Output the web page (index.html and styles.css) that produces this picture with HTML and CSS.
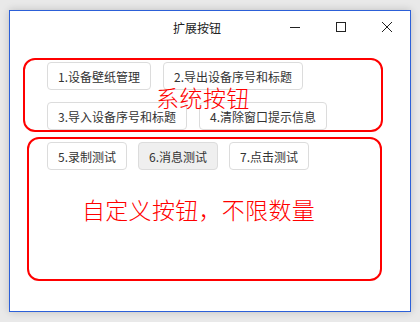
FILE: index.html
```html
<!DOCTYPE html>
<html lang="zh-CN">
<head>
  <meta charset="UTF-8" />
  <meta name="viewport" content="width=device-width, initial-scale=1.0"/>
  <title>扩展按钮</title>
  <link rel="stylesheet" href="styles.css">
</head>
<body>
  <div class="window">
    <div class="titlebar">
      <span class="title">扩展按钮</span>
      <button class="ctrl" type="button" aria-label="最小化">
        <svg width="12" height="12" viewBox="0 0 12 12"><path d="M1 6.5h10" stroke="#222" stroke-width="1"/></svg>
      </button>
      <button class="ctrl" type="button" aria-label="最大化">
        <svg width="12" height="12" viewBox="0 0 12 12"><rect x="1.5" y="1.5" width="9" height="9" fill="none" stroke="#222" stroke-width="1"/></svg>
      </button>
      <button class="ctrl" type="button" aria-label="关闭">
        <svg width="12" height="12" viewBox="0 0 12 12"><path d="M1 1l10 10M11 1L1 11" stroke="#222" stroke-width="1"/></svg>
      </button>
    </div>

    <div class="content">
      <div class="group system">
        <div class="row">
          <button class="btn" type="button">1.设备壁纸管理</button>
          <button class="btn" type="button">2.导出设备序号和标题</button>
        </div>
        <div class="row">
          <button class="btn" type="button">3.导入设备序号和标题</button>
          <button class="btn" type="button">4.清除窗口提示信息</button>
        </div>
        <span class="group-label">系统按钮</span>
      </div>

      <div class="group custom">
        <div class="row">
          <button class="btn" type="button">5.录制测试</button>
          <button class="btn active" type="button">6.消息测试</button>
          <button class="btn" type="button">7.点击测试</button>
        </div>
        <p class="custom-label">自定义按钮，不限数量</p>
      </div>
    </div>
  </div>
</body>
</html>
```

FILE: styles.css
```css
body {
  margin: 0;
  padding: 10px 9px;
  background: #e9e9e9;
  font-family: "Noto Sans CJK SC", "Microsoft YaHei", sans-serif;
}

.window {
  width: 402px;
  height: 302px;
  box-sizing: border-box;
  border: 1px solid #2c60d8;
  background: #fff;
  box-shadow: 0 0 8px rgba(0,0,0,0.18);
}

.titlebar {
  display: flex;
  align-items: center;
  height: 32px;
}

.title {
  flex: 1;
  text-align: center;
  padding-left: 112px;
  font-size: 12px;
  color: #222;
}

.ctrl {
  width: 46px;
  height: 32px;
  padding: 0;
  border: none;
  background: none;
  display: flex;
  align-items: center;
  justify-content: center;
}

.content {
  padding: 15px 0 0 13px;
}

.group {
  box-sizing: border-box;
  border: 2px solid #ff0000;
  border-radius: 12px;
}

.system {
  position: relative;
  width: 360px;
  height: 74px;
  padding: 2px 0 0 22px;
  display: flex;
  flex-direction: column;
  gap: 12px;
}

.custom {
  width: 355px;
  height: 144px;
  margin: 5px 0 0 4px;
  padding: 3px 0 0 18px;
}

.row {
  display: flex;
  gap: 12px;
}

.custom .row {
  gap: 11px;
}

.btn {
  height: 28px;
  padding: 0 10px;
  font-family: inherit;
  font-size: 12px;
  color: #333;
  background: #fff;
  border: 1px solid #dcdcdc;
  border-radius: 4px;
}

.btn.active {
  background: #efefef;
}

.group-label {
  position: absolute;
  left: 131px;
  top: 26px;
  font-size: 23px;
  font-weight: 300;
  line-height: 1;
  color: #ff0000;
  letter-spacing: 0.5px;
}

.custom-label {
  margin: 28px 0 0 35px;
  font-size: 23px;
  font-weight: 300;
  line-height: 1;
  color: #ff0000;
  letter-spacing: 0.3px;
}
```
